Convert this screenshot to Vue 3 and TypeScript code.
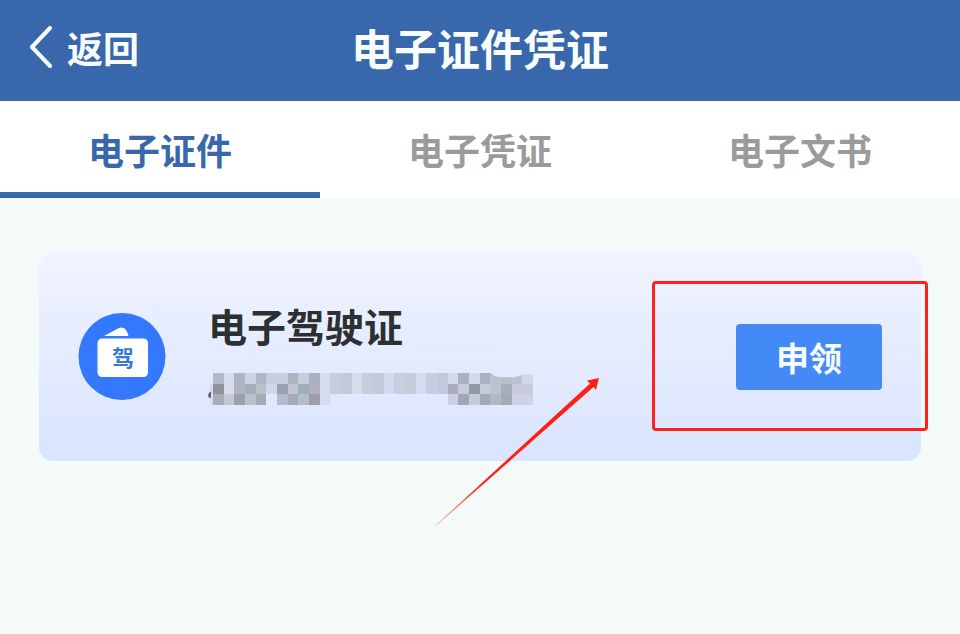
<script setup lang="ts">
import { ref } from 'vue'

interface Cell {
  x: number
  y: number
  fill: string
}

const tabs: string[] = ['电子证件', '电子凭证', '电子文书']
const active = ref<number>(0)

// Colours of the masked number, one list per row; an empty entry leaves the card visible.
const maskRows: string[][] = [
  ['b3bac8', 'd8dcee', 'acb5c1', 'cdd5e5', 'aeb8c3', 'c8cee0', 'c8cee0', 'abb5c0', 'c5cfdb', 'abb0c1', 'd7dcef',
    'c9cce1', 'c3c8da', 'd6dcee', 'c5ceda', 'c3cad9', 'd4daec', 'c7cedf', 'c4ccdb', 'd5dcef', 'c9cde1', 'c4c8da',
    'd4d9ed', 'abb0c5', 'd3d9ed', 'abb1c5', 'b9c4d0', 'b6c0cb', 'bac4d1', 'd2d8eb'],
  ['929399', 'd8dbef', 'acb5c1', 'a3b0b8', 'b6c1cc', 'd0d8e9', '9ba2af', 'c0c4d1', 'a1aeb6', 'aeb1c1', 'd8dcef',
    'c9cce1', 'c3c8da', 'd6dcee', 'c5ceda', 'c3cad9', 'd4daec', 'c7cedf', 'c4ccdb', 'd5dcef', 'c9cde1', 'c4c8da',
    'abadbd', 'c8c9db', '9199a2', 'c5cddb', 'b9c5d1', 'a6aeb8', 'c8cbdf', 'c6cbde'],
  ['a6adba', 'c3c8d5', '9aa0ae', 'bac1cd', 'a3acb6', '', 'b3bccb', 'a6a9b9', 'b5bdcb', '9d9ea7', 'd6dbf0',
    '', '', '', '', '', '', '', '', '', '', '',
    'c9d0e1', 'a2a7b7', 'c5cbda', 'a2a8b8', 'aebac6', 'a3acb4', 'cdd2e6', 'cdd2e6'],
]

const cells: Cell[] = maskRows.flatMap((row, y) =>
  row
    .map((c, x) => ({ x, y, fill: c ? `#${c}` : '' }))
    .filter((cell) => cell.fill !== ''),
)
</script>

<template>
  <div class="page">
    <header class="bar">
      <button class="back" type="button">
        <svg class="chevron" viewBox="0 0 24 42" aria-hidden="true">
          <path d="M21 2 L3 21 L21 40" />
        </svg>
        <span>返回</span>
      </button>
      <h1 class="heading">电子证件凭证</h1>
    </header>

    <nav class="tabs" role="tablist">
      <button
        v-for="(tab, i) in tabs"
        :key="tab"
        class="tab"
        :class="{ active: i === active }"
        type="button"
        role="tab"
        :aria-selected="i === active"
        @click="active = i"
      >
        {{ tab }}
      </button>
    </nav>

    <main class="content">
      <article class="card">
        <svg class="badge" viewBox="0 0 88 88" aria-hidden="true">
          <circle cx="44" cy="43.500" r="43.500" fill="#3478fe" />
          <path d="M26 23 L40 15.500 Q45.500 12.800 48 17 Q50 20 50.500 23 Z" fill="#fff" />
          <rect x="19.500" y="25.500" width="50.500" height="38.500" rx="4.500" fill="#fff" />
          <text x="45" y="53" text-anchor="middle">驾</text>
        </svg>

        <div class="info">
          <h2 class="name">电子驾驶证</h2>
          <svg class="mask" viewBox="0 0 30 3" preserveAspectRatio="none" aria-hidden="true">
            <rect x="-0.250" y="1" width="0.250" height="2" fill="#d5dbeb" />
            <path d="M-0.200 1.700 Q-0.550 1.900 -0.400 2.300 L-0.200 2.350 Z" fill="#55585f" />
            <g shape-rendering="crispEdges">
              <rect
                v-for="c in cells"
                :key="`${c.x}-${c.y}`"
                :x="c.x"
                :y="c.y"
                width="1"
                height="1"
                :fill="c.fill"
              />
            </g>
            <path d="M26 0 Q26.400 0.350 26.900 0.400 H28.200 Q28.700 0.300 29 0.150 H30 V-0.100 H26 Z" fill="#e3eafd" />
          </svg>
        </div>

        <div class="action">
          <button class="apply" type="button">申领</button>
          <span class="frame"></span>
        </div>

        <svg class="arrow" viewBox="0 0 164 148" aria-hidden="true">
          <defs>
            <linearGradient id="arrow-fade" gradientUnits="userSpaceOnUse" x1="0" y1="148" x2="163" y2="0">
              <stop offset="0" stop-color="#ff2015" stop-opacity="0.300" />
              <stop offset="0.300" stop-color="#ff2015" />
            </linearGradient>
          </defs>
          <path d="M0 147 L154 5.500 L151 2.500 L163 0 L160 12 L157.500 9 L0.500 147.500 Z" fill="url(#arrow-fade)" />
        </svg>
      </article>
    </main>
  </div>
</template>

<style>
body {
  margin: 0;
  background: #f4f9fa;
}
</style>

<style scoped>
.page {
  min-height: 100vh;
  background: #f4f9fa;
  font-family: "Noto Sans CJK SC", "Noto Sans", sans-serif;
}

button {
  margin: 0;
  padding: 0;
  border: 0;
  background: none;
  font-family: inherit;
  cursor: pointer;
}

.bar {
  display: grid;
  grid-template-columns: 1fr auto 1fr;
  align-items: center;
  height: 101px;
  padding: 0 29px 8px;
  box-sizing: border-box;
  background: #3867ab;
  color: #f8fdff;
}

.back {
  display: flex;
  align-items: center;
  justify-self: start;
  gap: 14px;
  color: inherit;
  font-size: 36px;
  font-weight: 700;
  line-height: 48px;
}

.chevron {
  width: 24px;
  height: 42px;
  fill: none;
  stroke: currentColor;
  stroke-width: 4;
  stroke-linecap: round;
  stroke-linejoin: round;
}

.heading {
  margin: 0;
  font-size: 43px;
  font-weight: 700;
  line-height: 60px;
}

.tabs {
  display: grid;
  grid-template-columns: repeat(3, 1fr);
  background: #fff;
}

.tab {
  height: 97px;
  padding-top: 4px;
  border-bottom: 6px solid transparent;
  color: #9b9b9b;
  font-size: 36px;
  font-weight: 700;
  line-height: 48px;
}

.tab.active {
  border-bottom-color: #3867ab;
  color: #3867ab;
}

.content {
  padding: 55px 39px;
}

.card {
  position: relative;
  display: flex;
  align-items: center;
  padding: 52px 39px;
  border-radius: 14px;
  background: linear-gradient(#f0f3ff, #d9e4ff);
}

.badge {
  flex: none;
  width: 88px;
  height: 88px;
}

.badge text {
  fill: #3478d8;
  font-size: 22px;
  font-weight: 700;
}

.info {
  flex: 1;
  padding: 0 0 4px 42px;
}

.name {
  margin: 0 0 28px;
  color: #2d3033;
  font-size: 39px;
  font-weight: 700;
  line-height: 40px;
}

.mask {
  display: block;
  width: 320px;
  height: 32px;
  margin-left: 5px;
  overflow: visible;
}

.action {
  position: relative;
  flex: none;
}

.apply {
  display: block;
  width: 146px;
  height: 66px;
  border-radius: 4px;
  background: #448af6;
  color: #f8fdff;
  font-size: 33px;
  font-weight: 700;
  line-height: 48px;
}

.frame {
  position: absolute;
  inset: -43px -46px -41px -84px;
  border: 3px solid #ff2218;
  border-radius: 4px;
  pointer-events: none;
}

.arrow {
  position: absolute;
  left: 397px;
  top: 125px;
  width: 164px;
  height: 148px;
  pointer-events: none;
}
</style>
